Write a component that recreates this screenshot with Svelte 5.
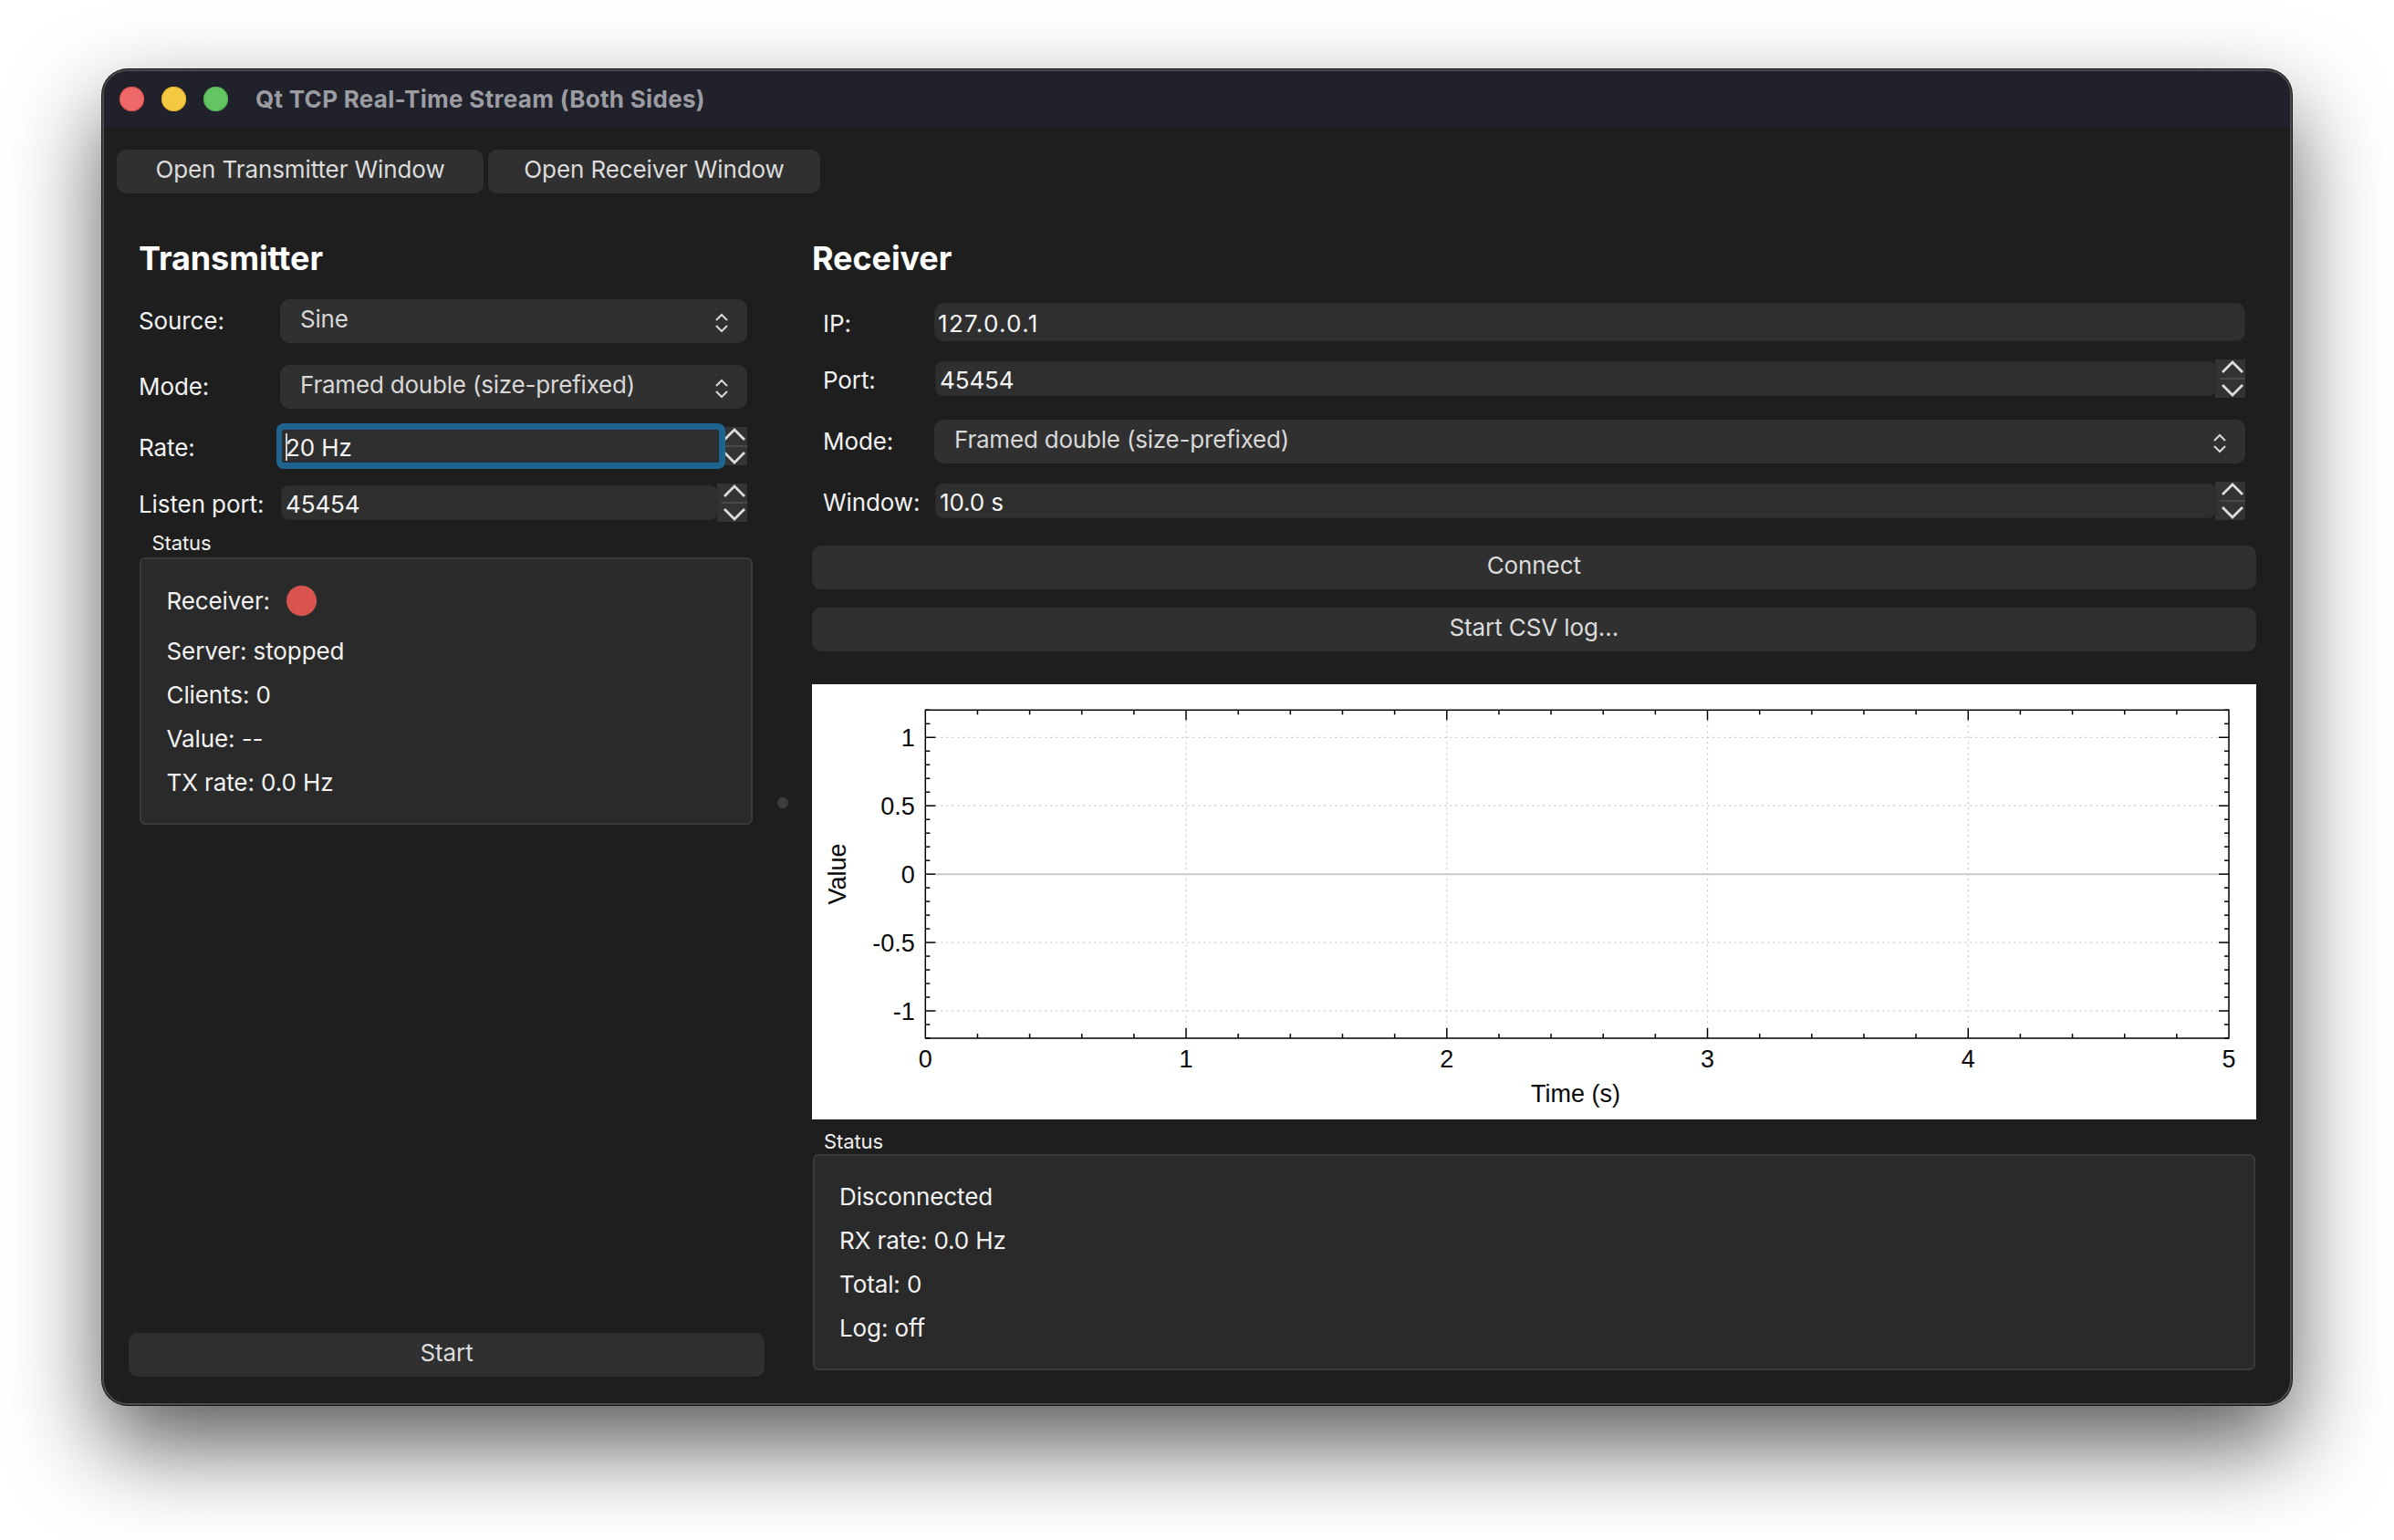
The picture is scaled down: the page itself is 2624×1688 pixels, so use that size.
<script>
  // plot geometry, in px inside the white plot block
  const ax = { left: 124.3, right: 1553, top: 28.3, bottom: 388 };
  const xScale = (ax.right - ax.left) / 5;
  const yScale = (ax.bottom - ax.top) / 2.4;
  const px = (v) => ax.left + v * xScale;
  const py = (v) => ax.top + (1.2 - v) * yScale;

  const xMajor = [0, 1, 2, 3, 4, 5];
  const yMajor = [
    { v: 1, label: '1' },
    { v: 0.5, label: '0.5' },
    { v: 0, label: '0' },
    { v: -0.5, label: '-0.5' },
    { v: -1, label: '-1' }
  ];
  const xMinor = Array.from({ length: 26 }, (_, i) => i * 0.2).filter((v) => Math.abs(v - Math.round(v)) > 0.01);
  const yMinor = Array.from({ length: 25 }, (_, i) => -1.2 + i * 0.1).filter((v) => Math.abs(v * 2 - Math.round(v * 2)) > 0.01);

  const txStatus = ['Server: stopped', 'Clients: 0', 'Value: --', 'TX rate: 0.0 Hz'];
  const rxStatus = ['Disconnected', 'RX rate: 0.0 Hz', 'Total: 0', 'Log: off'];
</script>

{#snippet chevrons()}
  <svg class="combo-arrows" viewBox="0 0 16 22" aria-hidden="true">
    <path d="M2 8 L8 2 L14 8 M2 14 L8 20 L14 14" />
  </svg>
{/snippet}

{#snippet spinner()}
  <svg class="spin" viewBox="0 0 33 42" aria-hidden="true">
    <rect width="33" height="42" fill="#333333" />
    <path class="spin-div" d="M5 21 H33" />
    <path class="spin-arrow" d="M8 14 L19 3 L30 14 M8 28 L19 39 L30 28" />
  </svg>
{/snippet}

<div class="desktop">
  <div class="window">
    <div class="titlebar">
      <span class="light red"></span>
      <span class="light yellow"></span>
      <span class="light green"></span>
      <span class="title">Qt TCP Real-Time Stream (Both Sides)</span>
    </div>

    <div class="toolbar">
      <button class="btn tool-a">Open Transmitter Window</button>
      <button class="btn tool-b">Open Receiver Window</button>
    </div>

    <div class="panes">
      <section class="pane left">
        <h2>Transmitter</h2>

        <div class="row source">
          <span class="label high">Source:</span>
          <div class="combo"><span>Sine</span>{@render chevrons()}</div>
        </div>
        <div class="row mode">
          <span class="label high">Mode:</span>
          <div class="combo"><span>Framed double (size-prefixed)</span>{@render chevrons()}</div>
        </div>
        <div class="row rate">
          <span class="label low">Rate:</span>
          <div class="spinbox">
            <div class="field focused"><i class="caret"></i>20 Hz</div>
            {@render spinner()}
          </div>
        </div>
        <div class="row listen">
          <span class="label low">Listen port:</span>
          <div class="spinbox">
            <div class="field">45454</div>
            {@render spinner()}
          </div>
        </div>

        <div class="legend">Status</div>
        <div class="group tx">
          <div class="line receiver">Receiver:<span class="dot"></span></div>
          {#each txStatus as text}
            <div class="line">{text}</div>
          {/each}
        </div>

        <div class="spacer"></div>
        <button class="btn start">Start</button>
      </section>

      <div class="splitter"><span></span></div>

      <section class="pane right">
        <h2>Receiver</h2>

        <div class="rrow ip">
          <span class="label low">IP:</span>
          <div class="field wide">127.0.0.1</div>
        </div>
        <div class="rrow port">
          <span class="label low">Port:</span>
          <div class="spinbox">
            <div class="field">45454</div>
            {@render spinner()}
          </div>
        </div>
        <div class="rrow rmode">
          <span class="label high">Mode:</span>
          <div class="combo"><span>Framed double (size-prefixed)</span>{@render chevrons()}</div>
        </div>
        <div class="rrow win">
          <span class="label low">Window:</span>
          <div class="spinbox">
            <div class="field">10.0 s</div>
            {@render spinner()}
          </div>
        </div>

        <button class="btn connect">Connect</button>
        <button class="btn csv">Start CSV log...</button>

        <div class="plot">
          <svg viewBox="0 0 1582.5 476" width="1582.5" height="476">
            {#each xMajor.slice(1, 5) as v}
              <line class="grid" x1={px(v)} x2={px(v)} y1={ax.top + 11} y2={ax.bottom - 11} />
            {/each}
            {#each yMajor as t}
              {#if t.v === 0}
                <line class="zero" x1={ax.left + 11} x2={ax.right - 11} y1={py(0)} y2={py(0)} />
              {:else}
                <line class="grid" x1={ax.left + 11} x2={ax.right - 11} y1={py(t.v)} y2={py(t.v)} />
              {/if}
            {/each}

            <rect class="frame" x={ax.left} y={ax.top} width={ax.right - ax.left} height={ax.bottom - ax.top} />

            {#each xMinor as v}
              <line class="tick" x1={px(v)} x2={px(v)} y1={ax.top} y2={ax.top + 5} />
              <line class="tick" x1={px(v)} x2={px(v)} y1={ax.bottom - 5} y2={ax.bottom} />
            {/each}
            {#each yMinor as v}
              <line class="tick" x1={ax.left} x2={ax.left + 5} y1={py(v)} y2={py(v)} />
              <line class="tick" x1={ax.right - 5} x2={ax.right} y1={py(v)} y2={py(v)} />
            {/each}
            {#each xMajor.slice(1, 5) as v}
              <line class="tick" x1={px(v)} x2={px(v)} y1={ax.top} y2={ax.top + 11} />
              <line class="tick" x1={px(v)} x2={px(v)} y1={ax.bottom - 11} y2={ax.bottom} />
            {/each}
            {#each yMajor as t}
              <line class="tick" x1={ax.left} x2={ax.left + 11} y1={py(t.v)} y2={py(t.v)} />
              <line class="tick" x1={ax.right - 11} x2={ax.right} y1={py(t.v)} y2={py(t.v)} />
              <text x={ax.left - 11.5} y={py(t.v) + 9.5} text-anchor="end">{t.label}</text>
            {/each}
            {#each xMajor as v}
              <text x={px(v)} y="419.5" text-anchor="middle">{v}</text>
            {/each}

            <text x="837" y="458" text-anchor="middle">Time (s)</text>
            <text transform="translate(36.7 208) rotate(-90)" text-anchor="middle">Value</text>
          </svg>
        </div>

        <div class="legend">Status</div>
        <div class="group rx">
          {#each rxStatus as text}
            <div class="line">{text}</div>
          {/each}
        </div>
      </section>
    </div>
  </div>
</div>

<style>
  :global(body) {
    background: #ffffff;
  }

  .desktop {
    box-sizing: border-box;
    width: 2624px;
    height: 1688px;
    padding: 75.5px 0 0 112px;
    overflow: hidden;
  }

  .window {
    box-sizing: border-box;
    width: 2400px;
    height: 1464.5px;
    display: flex;
    flex-direction: column;
    background: #1e1e1e;
    border: 2px solid #4c4c4c;
    border-radius: 28px;
    overflow: hidden;
    box-shadow: 0 0 0 1px #111111, 0 44px 100px rgba(0, 0, 0, 0.65);
    font-family: Inter, "Liberation Sans", sans-serif;
    font-size: 26px;
    letter-spacing: -0.1px;
    color: #f2f2f2;
  }

  .titlebar {
    flex: none;
    height: 62px;
    display: flex;
    align-items: center;
    padding-left: 17px;
    background: #20212a;
  }

  .light {
    width: 27px;
    height: 27px;
    border-radius: 50%;
    margin-right: 19px;
  }

  .red { background: #ee6a68; box-shadow: inset 0 0 0 1px #d9504e; }
  .yellow { background: #f5c842; box-shadow: inset 0 0 0 1px #dfae2e; }
  .green { background: #62c462; box-shadow: inset 0 0 0 1px #4fae50; }

  .title {
    margin-left: 11px;
    font-weight: 700;
    letter-spacing: 0.3px;
    color: #9c9da2;
  }

  .toolbar {
    flex: none;
    display: flex;
    gap: 5px;
    padding: 24px 0 0 14px;
  }

  .btn {
    display: block;
    height: 48px;
    padding: 0 0 5px;
    border: none;
    border-radius: 10px;
    background: #303030;
    color: #dcdcdc;
    font: inherit;
    letter-spacing: inherit;
  }

  .tool-a { width: 402px; }
  .tool-b { width: 364px; }

  .panes {
    flex: 1;
    display: flex;
    margin: 49.5px 0 29px 27px;
    min-height: 0;
  }

  .pane {
    display: flex;
    flex-direction: column;
  }

  .pane.left { width: 697px; }
  .pane.right { width: 1582.5px; }

  h2 {
    margin: 0;
    height: 44px;
    font-size: 36px;
    line-height: 44px;
    font-weight: 700;
    color: #ffffff;
  }

  .left h2 { padding-left: 11px; }
  .right h2 { padding-left: 0; }

  .label { flex: none; }
  .label.low { padding-top: 3px; }
  .label.high { padding-bottom: 2px; }

  .row {
    display: flex;
    align-items: center;
    padding: 0 19px 0 11px;
  }

  .row .label { width: 155px; }
  .row.source { margin-top: 23px; }
  .row.mode { margin-top: 24px; }
  .row.rate { margin-top: 16px; height: 50px; }
  .row.listen { margin-top: 16px; height: 42px; }

  .combo {
    flex: 1;
    height: 48px;
    display: flex;
    align-items: center;
    justify-content: space-between;
    padding: 0 20px 0 22px;
    border-radius: 10px;
    background: #303030;
    color: #d8d8d8;
    letter-spacing: -0.2px;
  }

  .combo span { position: relative; top: -3px; }

  .combo-arrows {
    width: 16px;
    height: 22px;
    margin-top: 4px;
    fill: none;
    stroke: #d8d8d8;
    stroke-width: 2;
  }

  .spinbox {
    flex: 1;
    display: flex;
    align-items: center;
    min-width: 0;
  }

  .field {
    box-sizing: border-box;
    flex: 1;
    height: 38px;
    margin: 0 -1px 0 1px;
    padding: 2px 0 0 4px;
    display: flex;
    align-items: center;
    border-radius: 8px;
    border: 1px solid #2a2a2a;
    background: #2f2f2f;
    color: #f5f5f5;
    position: relative;
    z-index: 1;
  }

  .field.wide {
    height: 42px;
    margin: 0;
    padding-left: 3px;
    border-radius: 10px;
    letter-spacing: 1.3px;
  }

  .field.focused {
    height: 36px;
    margin: 0 -2px 0 2px;
    padding-left: 3px;
    border-radius: 2px;
    box-shadow: 0 0 0 7px #1f6391;
    clip-path: inset(-7px -7px -7px -6px round 8px);
  }

  .caret {
    position: absolute;
    left: 3px;
    top: 3px;
    width: 2px;
    height: 30px;
    background: #d0d0d0;
  }

  .spin {
    flex: none;
    width: 33px;
    height: 42px;
  }

  .spin-arrow {
    fill: none;
    stroke: #dcdcdc;
    stroke-width: 2.8;
  }

  .spin-div {
    stroke: #484848;
    stroke-width: 2;
  }

  .legend {
    box-sizing: border-box;
    height: 39px;
    padding: 11px 0 0 13.5px;
    font-size: 22px;
    line-height: 24px;
    color: #f0f0f0;
  }

  .left .legend { margin-left: 12px; }
  .right .legend { padding-left: 13px; height: 38.5px; padding-top: 12px; }

  .group {
    box-sizing: border-box;
    border: 2px solid #3a3a3a;
    border-radius: 6px;
    background: #2a2a2a;
  }

  .group.tx {
    width: 672.5px;
    height: 292.5px;
    margin-left: 11.5px;
    padding: 22.5px 0 0 28px;
  }

  .group.rx {
    width: 1580.5px;
    height: 236.5px;
    margin-left: 1px;
    padding: 20px 0 0 27px;
  }

  .line {
    height: 48px;
    display: flex;
    align-items: center;
  }

  .line.receiver {
    height: 46px;
    margin-bottom: 8px;
  }

  .dot {
    width: 33px;
    height: 33px;
    margin-left: 18px;
    border-radius: 50%;
    background: #d9534f;
    box-shadow: 0 0 0 1px #333333;
  }

  .spacer { flex: 1; }

  .start { width: 100%; padding-bottom: 6px; }

  .splitter {
    flex: none;
    width: 52px;
    position: relative;
  }

  .splitter span {
    position: absolute;
    left: 14px;
    top: 613px;
    width: 12px;
    height: 12px;
    border-radius: 50%;
    background: #3d3d3d;
  }

  .rrow {
    display: flex;
    align-items: center;
    padding: 0 12px 0 12px;
  }

  .rrow .label { width: 122px; }
  .rrow.ip { margin-top: 27px; }
  .rrow.port { margin-top: 20px; height: 42px; }
  .rrow.rmode { margin-top: 24px; }
  .rrow.win { margin-top: 20px; height: 42px; }

  .connect { width: 100%; margin-top: 28px; flex: none; }
  .csv { width: 100%; margin-top: 20px; flex: none; }

  .plot {
    flex: none;
    height: 476.5px;
    margin-top: 36px;
    background: #ffffff;
  }

  .plot svg {
    display: block;
    font-family: "Liberation Sans", Arial, sans-serif;
    font-size: 27px;
    letter-spacing: 0;
  }

  .plot text { fill: #0a0a0a; }

  .frame {
    fill: none;
    stroke: #000000;
    stroke-width: 1.5;
  }

  .tick {
    stroke: #000000;
    stroke-width: 1.5;
  }

  .grid {
    stroke: #c8c8c8;
    stroke-width: 1.2;
    stroke-dasharray: 2 4;
  }

  .zero {
    stroke: #c8c8c8;
    stroke-width: 2;
  }
</style>
